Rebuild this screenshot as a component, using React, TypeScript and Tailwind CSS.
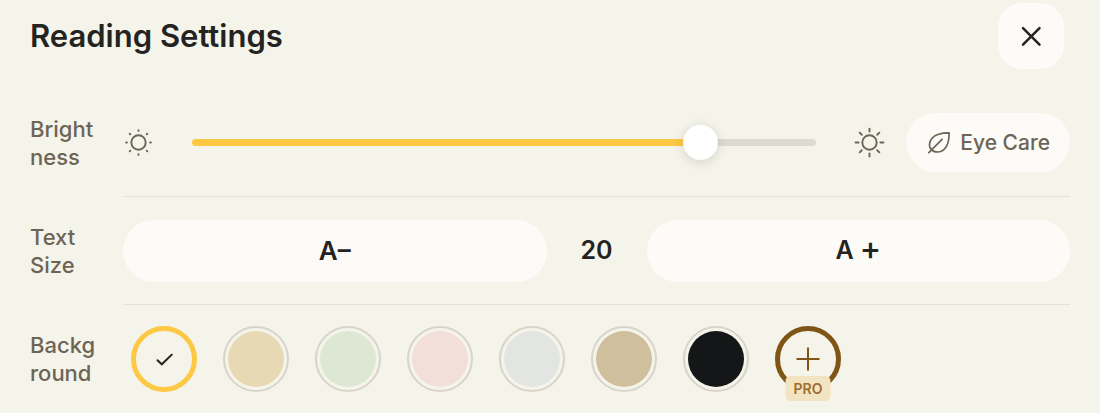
import React, { useState } from 'react';

interface SettingRowProps {
  label: string;
  htmlFor?: string;
  last?: boolean;
  children: React.ReactNode;
}

interface SunIconProps {
  className?: string;
  rayStart: number;
  rayEnd: number;
}

const MAX_BRIGHTNESS = 60;

const BACKGROUNDS = [
  { name: 'Default', fill: 'bg-[#f5f4eb]' },
  { name: 'Sand', fill: 'bg-[#e7d9b3]' },
  { name: 'Mint', fill: 'bg-[#dce8d3]' },
  { name: 'Rose', fill: 'bg-[#f2dfda]' },
  { name: 'Mist', fill: 'bg-[#e2e5e2]' },
  { name: 'Kraft', fill: 'bg-[#d0bf9d]' },
  { name: 'Night', fill: 'bg-[#141617]' },
];

const RAY_ANGLES = [0, 45, 90, 135, 180, 225, 270, 315];

const SunIcon: React.FC<SunIconProps> = ({ className, rayStart, rayEnd }) => (
  <svg
    viewBox="0 0 32 32"
    className={className}
    fill="none"
    stroke="currentColor"
    strokeWidth="1.9"
    strokeLinecap="round"
    aria-hidden="true"
  >
    <circle cx="15.5" cy="15.5" r="7.2" />
    {RAY_ANGLES.map((angle) => (
      <line
        key={angle}
        x1="15.5"
        y1={15.5 - rayStart}
        x2="15.5"
        y2={15.5 - rayEnd}
        transform={`rotate(${angle} 15.5 15.5)`}
      />
    ))}
  </svg>
);

const LeafIcon: React.FC = () => (
  <svg
    viewBox="0 0 24 24"
    className="size-6"
    fill="none"
    stroke="currentColor"
    strokeWidth="1.7"
    strokeLinecap="round"
    strokeLinejoin="round"
    aria-hidden="true"
  >
    <path d="M23 1.9C15.5 1.9 9.3 3.4 6 7.2C2.8 11 2.8 15.6 5.2 18.4C8.2 21.9 14.6 22 18.5 18C22 14.3 23.3 8.6 23 1.9Z" />
    <path d="M2.8 21.6L16 8.4" />
  </svg>
);

const SettingRow: React.FC<SettingRowProps> = ({ label, htmlFor, last, children }) => (
  <div className="flex">
    <div className="flex w-[93px] shrink-0 items-center pr-6">
      <label
        htmlFor={htmlFor}
        className="w-full text-[22px] leading-7 font-medium break-words text-[#6d6456]"
      >
        {label}
      </label>
    </div>
    <div
      className={`flex h-[108px] min-w-0 flex-1 items-center ${
        last ? '' : 'border-b border-[#e4e2d9]'
      }`}
    >
      {children}
    </div>
  </div>
);

const App: React.FC = () => {
  const [brightness, setBrightness] = useState(50);
  const [textSize, setTextSize] = useState(20);
  const [background, setBackground] = useState('Default');

  const filled = (brightness / MAX_BRIGHTNESS) * 100;

  return (
    <main className="min-h-screen bg-[#f5f4eb] px-[30px] font-['Inter',sans-serif] text-[#24231f]">
      <header className="flex items-center justify-between pt-[3px] pr-[6px] pb-5">
        <h1 className="text-[31px] leading-10 font-semibold">Reading Settings</h1>
        <button
          type="button"
          aria-label="Close"
          className="flex size-[66px] items-center justify-center rounded-3xl bg-[#fcfbf7]"
        >
          <svg
            viewBox="0 0 24 24"
            className="size-6"
            fill="none"
            stroke="currentColor"
            strokeWidth="2.5"
            strokeLinecap="round"
            aria-hidden="true"
          >
            <path d="M4 4.2L20.5 20.7M20.5 4.2L4 20.7" />
          </svg>
        </button>
      </header>

      <SettingRow label="Brightness" htmlFor="brightness">
        <SunIcon className="size-8 shrink-0 text-[#6d6456]" rayStart={11.6} rayEnd={12.4} />
        <input
          id="brightness"
          type="range"
          min={0}
          max={MAX_BRIGHTNESS}
          value={brightness}
          onChange={(e) => setBrightness(Number(e.target.value))}
          className="mr-[38px] ml-[37px] h-[7px] min-w-0 flex-1 appearance-none rounded-full [&::-webkit-slider-thumb]:size-[35px] [&::-webkit-slider-thumb]:appearance-none [&::-webkit-slider-thumb]:rounded-full [&::-webkit-slider-thumb]:bg-white [&::-webkit-slider-thumb]:shadow-[0_2px_12px_rgba(0,0,0,0.14)]"
          style={{
            background: `linear-gradient(to right, #fdc843 ${filled}%, #dddacf ${filled}%)`,
          }}
        />
        <SunIcon className="size-8 shrink-0 text-[#6d6456]" rayStart={10.9} rayEnd={13.9} />
        <button
          type="button"
          className="ml-5 flex h-[59px] shrink-0 items-center gap-[10px] rounded-full bg-[#fcfbf7] px-5 text-[21px] font-medium text-[#6d6456]"
        >
          <LeafIcon />
          Eye Care
        </button>
      </SettingRow>

      <SettingRow label="Text Size" htmlFor="text-size">
        <button
          type="button"
          aria-label="Decrease text size"
          onClick={() => setTextSize(textSize - 1)}
          className="h-[62px] flex-1 rounded-full bg-[#fcfbf7] text-[26px] font-semibold"
        >
          A–
        </button>
        <output id="text-size" className="w-[100px] text-center text-[25px] font-semibold">
          {textSize}
        </output>
        <button
          type="button"
          aria-label="Increase text size"
          onClick={() => setTextSize(textSize + 1)}
          className="flex h-[62px] flex-1 items-center justify-center gap-[6px] rounded-full bg-[#fcfbf7] text-[25px] font-semibold"
        >
          <span>A</span>
          <span className="pb-1 text-[32px] leading-8 font-medium">+</span>
        </button>
      </SettingRow>

      <SettingRow label="Background" last>
        <div className="flex gap-[26px] pl-2" role="group" aria-label="Background">
          {BACKGROUNDS.map(({ name, fill }) => (
            <label key={name} className="relative block size-[66px]">
              <input
                type="radio"
                name="background"
                aria-label={name}
                checked={background === name}
                onChange={() => setBackground(name)}
                className={`block size-full appearance-none rounded-full border-2 border-[#d8d4c9] bg-clip-content p-[3px] checked:border-5 checked:border-[#fdc843] checked:p-0 ${fill}`}
              />
              {background === name && (
                <svg
                  viewBox="0 0 66 66"
                  className="pointer-events-none absolute inset-0"
                  fill="none"
                  stroke="currentColor"
                  strokeWidth="2"
                  strokeLinecap="round"
                  aria-hidden="true"
                >
                  <path d="M26.5 34.2L30.8 38.3L40.8 28.6" />
                </svg>
              )}
            </label>
          ))}
          <button
            type="button"
            aria-label="Custom background, PRO"
            className="relative flex size-[66px] items-center justify-center rounded-full border-5 border-[#7f5515] text-[#7f5515]"
          >
            <svg
              viewBox="0 0 24 24"
              className="size-6"
              fill="none"
              stroke="currentColor"
              strokeWidth="2"
              aria-hidden="true"
            >
              <path d="M12 0.5V23.5M0.5 12H23.5" />
            </svg>
            <span className="absolute top-[45px] left-1/2 h-[25px] w-[45px] -translate-x-1/2 rounded-[5px] bg-[#f3e4c1] text-center text-sm leading-[25px] font-semibold text-[#a06c2f]">
              PRO
            </span>
          </button>
        </div>
      </SettingRow>
    </main>
  );
};

export default App;
